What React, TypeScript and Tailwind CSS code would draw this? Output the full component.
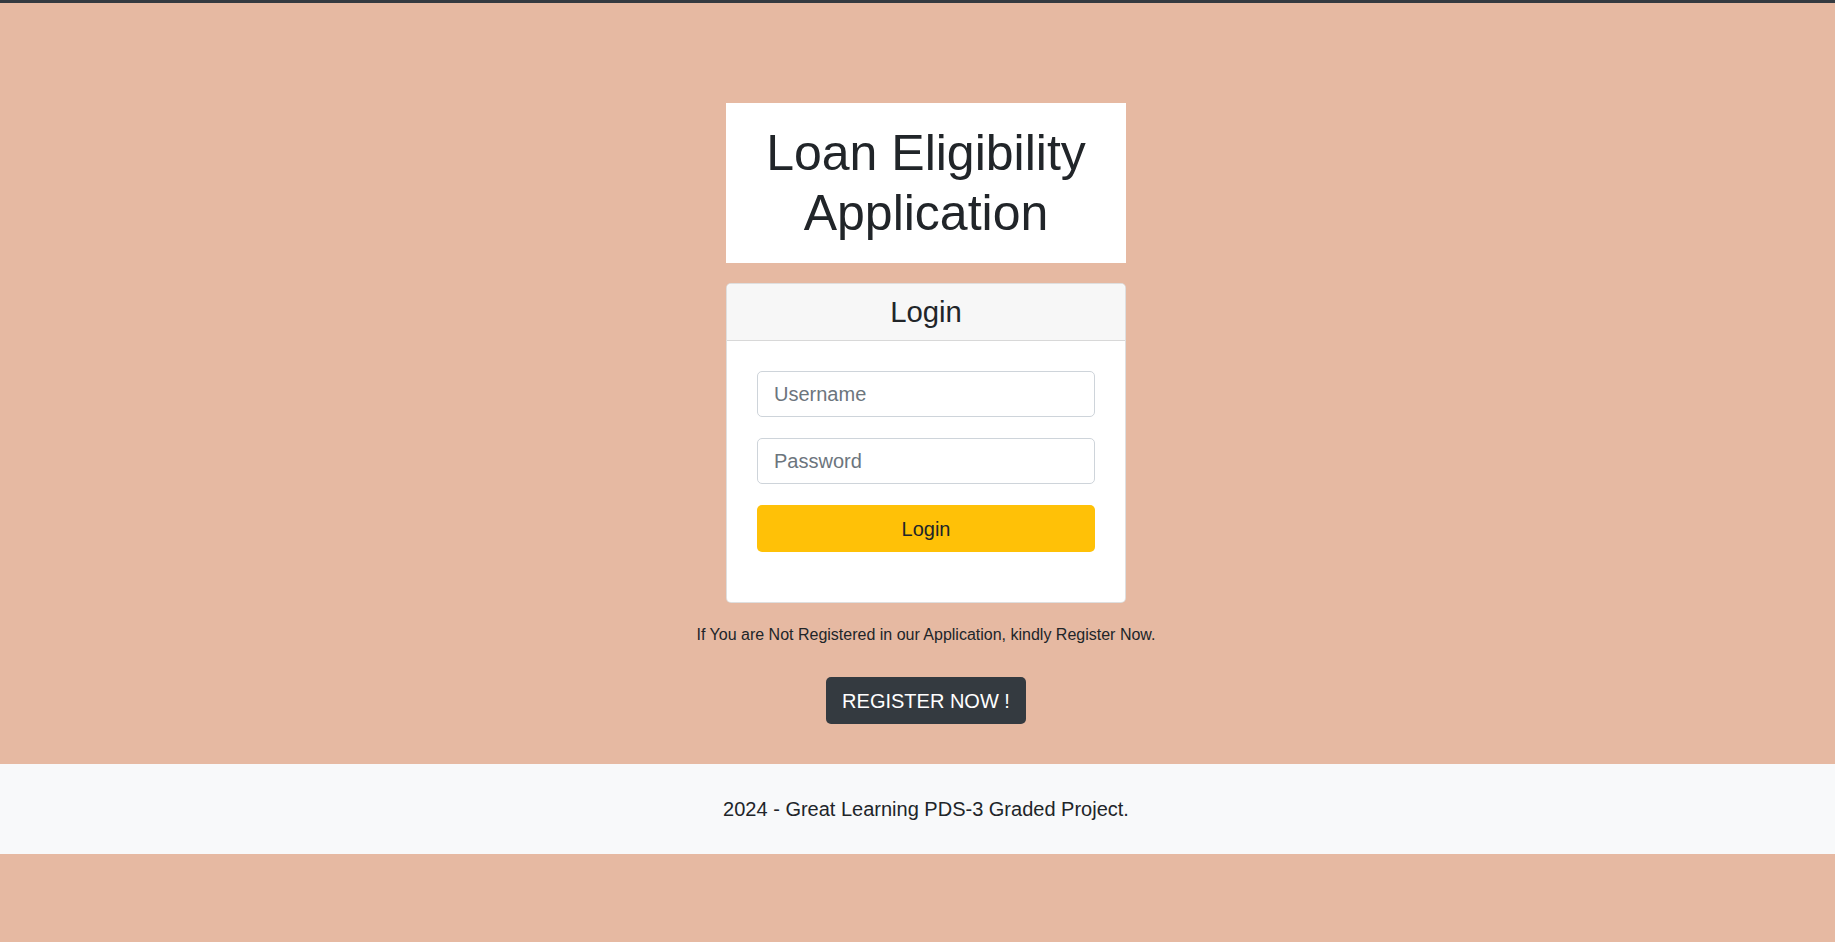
import { useState } from "react";

const App = () => {
  const [username, setUsername] = useState("");
  const [password, setPassword] = useState("");

  return (
    <div
      className="min-h-screen bg-[#e6b9a2] border-t-[3px] border-[#343a40] text-[#212529]"
      style={{ fontFamily: '"Liberation Sans", Arial, sans-serif' }}
    >
      <div className="pl-[17px] pt-[100px] flex flex-col items-center">
        {/* タイトル */}
        <div className="w-[400px] bg-white py-5 text-center text-[50px] leading-[60px]">
          Loan Eligibility Application
        </div>

        {/* ログインカード */}
        <div className="mt-5 w-[400px] bg-white border border-black/[0.125] rounded-[5px]">
          <div className="bg-[#f7f7f7] border-b border-black/[0.125] rounded-t-[5px] h-[57px] flex items-center justify-center">
            <h3 className="text-[29.3px] leading-[34px]">Login</h3>
          </div>
          <form
            className="px-[30px] pt-[30px] pb-[50px] flex flex-col"
            onSubmit={(e) => e.preventDefault()}
          >
            <input
              type="text"
              placeholder="Username"
              value={username}
              onChange={(e) => setUsername(e.target.value)}
              className="h-[46px] w-full border border-[#ced4da] rounded-[5px] px-4 text-[20px] placeholder:text-[#6c757d] outline-none"
            />
            <input
              type="password"
              placeholder="Password"
              value={password}
              onChange={(e) => setPassword(e.target.value)}
              className="mt-[21px] h-[46px] w-full border border-[#ced4da] rounded-[5px] px-4 text-[20px] placeholder:text-[#6c757d] outline-none"
            />
            <button
              type="submit"
              className="mt-[21px] h-[47px] w-full bg-[#ffc107] rounded-[5px] text-[20px] text-[#212529]"
            >
              Login
            </button>
          </form>
        </div>

        <p className="mt-5 text-[16px] leading-6">
          If You are Not Registered in our Application, kindly Register Now.
        </p>

        <button className="mt-[30px] w-[200px] h-[47px] bg-[#343a40] text-white rounded-[5px] text-[20px]">
          REGISTER NOW !
        </button>
      </div>

      <footer className="mt-10 h-[90px] bg-[#f8f9fa] pl-[17px] flex items-center justify-center text-[20px]">
        2024 - Great Learning PDS-3 Graded Project.
      </footer>
    </div>
  );
};

export default App;
